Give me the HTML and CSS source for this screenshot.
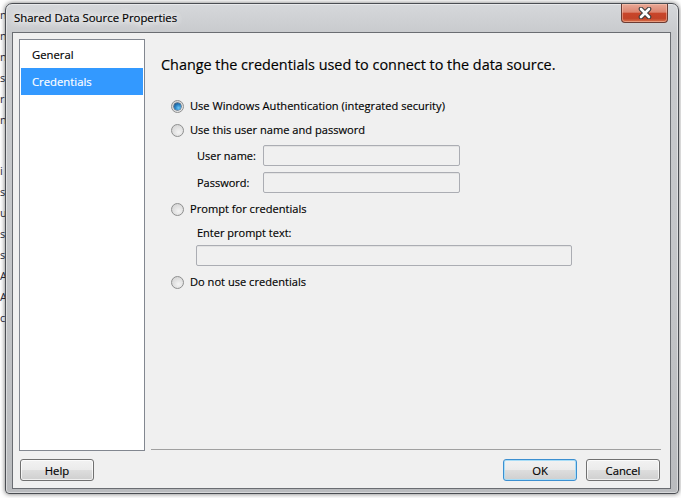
FILE: index.html
```html
<!DOCTYPE html>
<html>
<head>
<meta charset="utf-8">
<link rel="stylesheet" href="styles.css">
</head>
<body>
<div class="desktop">
  <div class="bg-left">
    <span>n</span><span>n</span><span>n</span><span>s</span><span>r</span><span>n</span>
    <span class="gap"></span>
    <span>i</span><span>s</span><span>u</span><span>s</span><span>s</span><span>A</span><span>A</span><span>c</span>
  </div>

  <div class="window">
    <div class="titlebar">
      <span class="title">Shared Data Source Properties</span>
      <div class="close">
        <svg width="16" height="12" viewBox="0 0 16 12">
          <path d="M4 2 L12 10 M12 2 L4 10" stroke="#3c3c3c" stroke-width="4.6" stroke-linecap="round"/>
          <path d="M4 2 L12 10 M12 2 L4 10" stroke="#ffffff" stroke-width="2.6" stroke-linecap="round"/>
        </svg>
      </div>
    </div>
    <div class="client">
      <div class="main">
        <ul class="nav">
          <li>General</li>
          <li class="sel">Credentials</li>
        </ul>
        <div class="panel">
          <h1 class="heading">Change the credentials used to connect to the data source.</h1>
          <div class="opt opt-first"><span class="radio on"></span>Use Windows Authentication (integrated security)</div>
          <div class="opt opt-tight"><span class="radio"></span>Use this user name and password</div>
          <div class="field field-user"><span class="lbl">User name:</span><span class="box box-short"></span></div>
          <div class="field field-pass"><span class="lbl">Password:</span><span class="box box-short"></span></div>
          <div class="opt opt-prompt"><span class="radio"></span>Prompt for credentials</div>
          <div class="prompt-lbl">Enter prompt text:</div>
          <span class="box box-long"></span>
          <div class="opt opt-last"><span class="radio"></span>Do not use credentials</div>
        </div>
      </div>
      <div class="footer">
        <div class="btn">Help</div>
        <div class="spacer"></div>
        <div class="btn btn-ok">OK</div>
        <div class="btn">Cancel</div>
      </div>
    </div>
  </div>
</div>
</body>
</html>
```

FILE: styles.css
```css
* { box-sizing: border-box; }

html, body {
  margin: 0;
  padding: 0;
}

body {
  width: 681px;
  height: 498px;
  overflow: hidden;
  background: #ffffff;
  font-family: "Open Sans", "Noto Sans", sans-serif;
  font-size: 11px;
  color: #000;
  -webkit-text-stroke: 0.15px #000;
}

.desktop {
  position: relative;
  width: 681px;
  height: 498px;
  background: linear-gradient(180deg, #ffffff 0%, #ffffff 100%);
  overflow: hidden;
}

/* underlying window text peeking out at the left */
.bg-left {
  position: absolute;
  left: 0;
  top: 4px;
  width: 8px;
  display: flex;
  flex-direction: column;
  align-items: flex-start;
  font-size: 11px;
  line-height: 21px;
  color: #2a2a3a;
  -webkit-text-stroke: 0;
}
.bg-left .gap { height: 30px; }
.bg-left span { white-space: nowrap; }

/* dialog window */
.window {
  position: absolute;
  left: 5px;
  top: 3px;
  width: 674px;
  height: 491px;
  border: 1px solid #4a4d52;
  border-radius: 7px 7px 4px 4px;
  padding: 0 7px 4px 6px;
  display: flex;
  flex-direction: column;
  background: linear-gradient(180deg, #d6d8db 0%, #c8cacd 6%, #c3c5c8 60%, #b9bbbe 100%);
  box-shadow: 0 0 5px rgba(0, 0, 0, 0.55), inset 0 0 0 1px rgba(255, 255, 255, 0.45);
}

.titlebar {
  height: 28px;
  display: flex;
  align-items: flex-start;
  flex: none;
}

.title {
  margin: 6px 0 0 2px;
  font-size: 11.4px;
  line-height: 16px;
  color: #000;
  text-shadow: 0 0 6px #fff, 0 0 10px #fff, 0 0 12px #fff;
  flex: 1;
}

.close {
  width: 47px;
  height: 19px;
  margin-right: 3px;
  border: 1px solid #6b3b33;
  border-top: none;
  border-radius: 0 0 4px 4px;
  background: linear-gradient(180deg, #e8a896 0%, #dc8570 45%, #c8452a 52%, #c24328 80%, #d9744f 100%);
  box-shadow: inset 0 0 0 1px rgba(255, 210, 190, 0.45);
  display: flex;
  align-items: center;
  justify-content: center;
}
.close svg { display: block; }

.client {
  flex: 1;
  background: #f0f0f0;
  border: 1px solid #6a6d72;
  padding: 6px 9px 7px 6px;
  display: flex;
  flex-direction: column;
}

.main {
  flex: 1;
  display: flex;
  gap: 6px;
  min-height: 0;
}

.nav {
  list-style: none;
  margin: 0;
  padding: 1px 1px 0 1px;
  width: 126px;
  background: #ffffff;
  border: 1px solid #828790;
  flex: none;
}
.nav li {
  height: 27px;
  line-height: 27px;
  padding-left: 11px;
  font-size: 11.3px;
  color: #000;
}
.nav li.sel {
  background: #3399ff;
  color: #ffffff;
  -webkit-text-stroke: 0.15px #fff;
}

.panel {
  flex: 1;
  margin-bottom: 1px;
  border-bottom: 1px solid #a0a0a0;
  padding-left: 20px;
  display: flex;
  flex-direction: column;
  align-items: flex-start;
}

.heading {
  margin: 16px 0 0 -10px;
  font-weight: normal;
  font-size: 14.4px;
  line-height: 20px;
  color: #000;
}

.opt {
  display: flex;
  align-items: center;
  height: 20px;
  line-height: 20px;
  font-size: 11.1px;
}
.opt-first { margin-top: 21px; }
.opt-tight { margin-top: 4px; }
.opt-prompt { margin-top: 6px; }
.opt-last { margin-top: 6px; }

.radio {
  width: 13px;
  height: 13px;
  border-radius: 50%;
  border: 1px solid #8e8f8f;
  background: radial-gradient(circle at 60% 65%, #f4f4f4 0%, #e2e2e2 45%, #cfcfcf 100%);
  margin-right: 6px;
  flex: none;
  display: flex;
  align-items: center;
  justify-content: center;
}
.radio.on::after {
  content: "";
  width: 7px;
  height: 7px;
  border-radius: 50%;
  background: radial-gradient(circle at 65% 70%, #6ec8f5 0%, #2b86c8 45%, #113b6b 100%);
  box-shadow: 0 0 0 0.5px #0f3050;
}

.field {
  display: flex;
  align-items: center;
  padding-left: 25px;
  height: 21px;
}
.field-user { margin-top: 5px; }
.field-pass { margin-top: 6px; }

.lbl {
  width: 67px;
  font-size: 11px;
  padding-left: 1px;
}

.box {
  display: block;
  height: 21px;
  border: 1px solid #abadb3;
  border-radius: 2px;
  background: #f0f0f0;
  box-shadow: inset 0 1px 0 #e3e3e3;
}
.box-short { width: 197px; }
.box-long {
  width: 376px;
  margin: 2px 0 0 25px;
}

.prompt-lbl {
  margin: 4px 0 0 26px;
  height: 20px;
  line-height: 20px;
  font-size: 11px;
}

.footer {
  flex: none;
  height: 22px;
  margin-top: 8px;
  display: flex;
  gap: 9px;
  padding-left: 1px;
  padding-right: 1px;
}
.spacer { flex: 1; }

.btn {
  width: 74px;
  height: 22px;
  border: 1px solid #707070;
  border-radius: 3px;
  background: linear-gradient(180deg, #f2f2f2 0%, #ebebeb 48%, #dddddd 52%, #cfcfcf 100%);
  box-shadow: inset 0 0 0 1px rgba(255, 255, 255, 0.7);
  display: flex;
  align-items: center;
  justify-content: center;
  font-size: 11.3px;
  color: #000;
}
.btn-ok {
  border-color: #3c8fd0;
  box-shadow: inset 0 0 0 1px #a8ddf7;
}
```
